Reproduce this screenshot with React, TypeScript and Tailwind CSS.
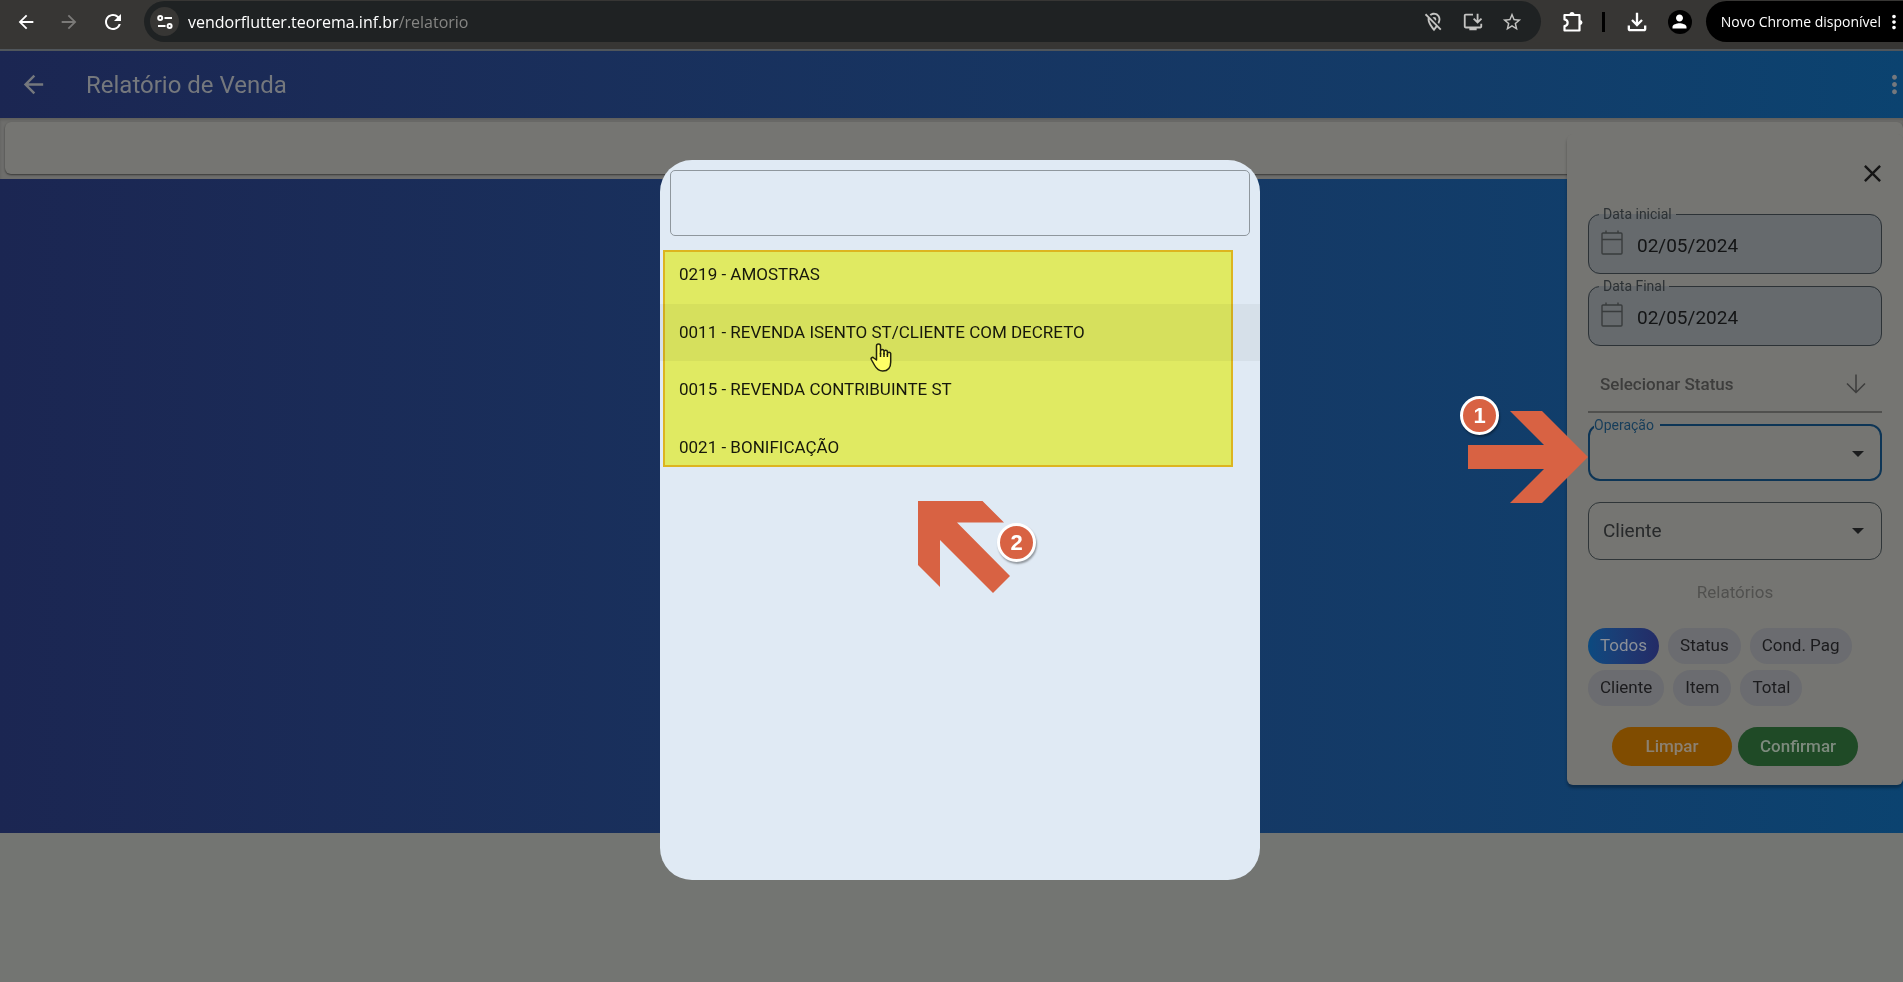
import type { ReactNode } from "react";
import {
  MdArrowBack,
  MdArrowForward,
  MdClose,
  MdMoreVert,
  MdOutlineFileDownload,
  MdOutlineInstallDesktop,
  MdOutlineLocationOff,
  MdPerson,
  MdRefresh,
  MdStarBorder,
} from "react-icons/md";

const operations = [
  "0219 - AMOSTRAS",
  "0011 - REVENDA ISENTO ST/CLIENTE COM DECRETO",
  "0015 - REVENDA CONTRIBUINTE ST",
  "0021 - BONIFICAÇÃO",
];

const reportRows = [
  ["Todos", "Status", "Cond. Pag"],
  ["Cliente", "Item", "Total"],
];

function TuneIcon() {
  return (
    <svg width="16" height="14" viewBox="0 0 16 14" fill="none" stroke="currentColor" strokeWidth="2">
      <circle cx="3.2" cy="3" r="2" />
      <path d="M7.5 3H15M1 11h7.5" />
      <circle cx="12.6" cy="11" r="2" />
    </svg>
  );
}

function PuzzleIcon() {
  return (
    <svg width="22" height="22" viewBox="0 0 22 22" fill="none" stroke="currentColor" strokeWidth="2.2" strokeLinejoin="round">
      <path d="M2.500 4H17.500V19.500H2.500V15.200c4.200-.6 4.200-6.200 0-6.800z" />
      <path d="M7.500 3.500a2.500 2.500 0 0 1 5 0zM18 9a2.500 2.500 0 0 1 0 5z" fill="currentColor" stroke="none" />
    </svg>
  );
}

function CalendarIcon() {
  return (
    <svg width="22" height="25" viewBox="0 0 22 25" fill="none" stroke="currentColor" strokeWidth="1.4" className="shrink-0">
      <rect x="1" y="3" width="20" height="21" rx="1" />
      <path d="M1 9.5h20M5 0.5V3M17 0.5V3" />
    </svg>
  );
}

function Caret() {
  return (
    <svg width="12" height="6" viewBox="0 0 12 6" fill="currentColor" className="pointer-events-none shrink-0 text-[#1b1c1d]">
      <path d="M0 0h12L6 6z" />
    </svg>
  );
}

function BrowserBar() {
  return (
    <header className="flex h-[51px] shrink-0 items-start overflow-hidden border-b-2 border-[#50565b] bg-[#373634] text-white">
      <div className="flex h-11 items-center gap-[21px] pl-[15px]">
        <button aria-label="Voltar"><MdArrowBack size={22} /></button>
        <button aria-label="Avançar" className="text-[#7b7a78]"><MdArrowForward size={22} /></button>
        <button aria-label="Recarregar"><MdRefresh size={24} /></button>
      </div>
      <div className="mt-px ml-[19px] flex h-[41px] min-w-0 flex-1 items-center rounded-full bg-[#1f2223] pr-[18px] pl-[6px]">
        <span className="flex size-[29px] shrink-0 items-center justify-center rounded-full bg-[#373634]">
          <TuneIcon />
        </span>
        <span className="ml-[9px] flex-1 font-['Open_Sans','Noto_Sans',sans-serif] text-base">
          vendorflutter.teorema.inf.br<span className="text-[#858583]">/relatorio</span>
        </span>
        <div className="flex items-center gap-[17px] text-[#c4c4c2]">
          <MdOutlineLocationOff size={22} />
          <MdOutlineInstallDesktop size={22} />
          <MdStarBorder size={22} />
        </div>
      </div>
      <div className="flex h-[43px] items-center">
        <button aria-label="Extensões" className="ml-[21px]"><PuzzleIcon /></button>
        <span className="ml-[18px] h-5 w-[3px] bg-black" />
        <button aria-label="Downloads" className="ml-[18px]"><MdOutlineFileDownload size={28} /></button>
        <span className="ml-[17px] flex size-6 items-center justify-center rounded-full bg-black">
          <MdPerson size={21} />
        </span>
      </div>
      <button className="mt-px -mr-[2px] ml-[14px] flex h-[41px] items-center rounded-l-full bg-black pl-[15px] font-['Open_Sans','Noto_Sans',sans-serif] text-sm">
        Novo Chrome disponível
        <MdMoreVert size={22} className="ml-[2px]" />
      </button>
    </header>
  );
}

function DateField({ id, label }: { id: string; label: string }) {
  return (
    <fieldset className="min-w-0 rounded-xl border border-[#2c3236] bg-[#666a6d] px-[10px]">
      <legend className="px-1 text-sm leading-[14px] text-[#2c3134]">
        <label htmlFor={id}>{label}</label>
      </legend>
      <div className="flex h-[52px] items-center gap-[14px] px-[2px] pb-[10px] text-[#393c3d]">
        <CalendarIcon />
        <input id={id} defaultValue="02/05/2024" className="mt-2 w-full min-w-0 bg-transparent text-[19px] text-[#131415] outline-none" />
      </div>
    </fieldset>
  );
}

function FilterPanel() {
  return (
    <aside className="absolute top-[134px] right-0 w-[336px] rounded-md bg-[#757572] px-[21px] pb-[19px] shadow-[0_3px_3px_rgba(0,0,0,0.3)]">
      <div className="flex h-[73px] items-start justify-end pt-[25px]">
        <button aria-label="Fechar" className="-mr-[5px] text-[#151515]"><MdClose size={29} /></button>
      </div>
      <div className="flex flex-col gap-[5px]">
        <DateField id="data-inicial" label="Data inicial" />
        <DateField id="data-final" label="Data Final" />
      </div>
      <div className="relative mt-[11px] border-b-2 border-[#50504e]">
        <select aria-label="Selecionar Status" className="block h-[54px] w-full appearance-none px-3 pt-[2px] text-[17px] font-medium text-[#3d3d3c] outline-none">
          <option>Selecionar Status</option>
        </select>
        <svg width="20" height="20" viewBox="0 0 20 20" fill="none" stroke="#3d3d3c" strokeWidth="1.5" className="pointer-events-none absolute top-[17px] right-4">
          <path d="M10 0.500V18.500M1 9.500l9 9 9-9" />
        </svg>
      </div>
      <fieldset className="relative mt-[5px] min-w-0 rounded-xl border-2 border-[#0d3556]">
        <legend className="ml-1 pr-[6px] text-sm leading-[14px] text-[#163d5a]">
          <label htmlFor="operacao">Operação</label>
        </legend>
        <select id="operacao" className="block h-[47px] w-full appearance-none outline-none">
          <option></option>
        </select>
        <span className="pointer-events-none absolute inset-x-0 top-0 flex h-11 items-center justify-end pr-4">
          <Caret />
        </span>
      </fieldset>
      <div className="relative mt-[21px] rounded-xl border border-[#2f3538]">
        <select aria-label="Cliente" className="block h-14 w-full appearance-none px-[14px] text-[19px] text-[#27292a] outline-none">
          <option>Cliente</option>
        </select>
        <span className="pointer-events-none absolute inset-x-0 top-0 flex h-14 items-center justify-end pr-[17px]">
          <Caret />
        </span>
      </div>
      <h2 className="mt-5 text-center text-[17px] leading-6 text-[#51514f]">Relatórios</h2>
      <div className="mt-6 flex flex-col gap-[6px]">
        {reportRows.map((row) => (
          <div key={row[0]} className="flex gap-[9px]">
            {row.map((name) =>
              name === "Todos" ? (
                <button key={name} className="h-9 rounded-full bg-linear-to-r from-[#0b4a80] to-[#232b66] px-3 text-[17px] text-[#8b9098]">{name}</button>
              ) : (
                <button key={name} className="h-9 rounded-full bg-[#6b6c70] px-3 text-[17px] text-[#1b1b1d]">{name}</button>
              ),
            )}
          </div>
        ))}
      </div>
      <div className="mt-[21px] flex justify-center gap-[6px] text-[17px] font-medium">
        <button className="h-[39px] w-[120px] rounded-full bg-[#804c00] text-[#8b8172]">Limpar</button>
        <button className="h-[39px] w-[120px] rounded-full bg-[#1f4a26] text-[#7d8a7d]">Confirmar</button>
      </div>
      <div className="absolute top-[262px] -left-[109px]">
        <svg width="130" height="110" viewBox="0 0 130 110">
          <path fill="#d86243" d="M52 15h32l46 46-46 46H52l34-34H10V49h76z" />
        </svg>
        <Step className="absolute top-0 left-[2px]">1</Step>
      </div>
    </aside>
  );
}

function Step({ children, className }: { children: ReactNode; className: string }) {
  return (
    <span className={`${className} flex size-[39px] items-center justify-center rounded-full border-[3px] border-white bg-[#d86243] font-['Liberation_Sans',sans-serif] text-[22px] font-bold text-white shadow-[1px_2px_2px_rgba(0,0,0,0.35)]`}>
      {children}
    </span>
  );
}

function HandCursor() {
  return (
    <svg width="22" height="29" viewBox="0 0 22 29" fill="#fff" stroke="#222" strokeWidth="1.5" strokeLinejoin="round" className="absolute top-[183px] left-[210px]">
      <path d="M6.500 17V3a2 2 0 0 1 4 0v8-3a1.800 1.800 0 0 1 3.500 0v3-2a1.700 1.700 0 0 1 3.400 0v2.500-1a1.700 1.700 0 0 1 3.300 0V19c0 6-3 9-8 9-4 0-6-2-8-5.500L1.300 16.500c-.8-1.800 1.200-2.800 2.500-1.500z" />
      <path d="M10.500 10v4M14 10v4M17.400 11v3" fill="none" />
    </svg>
  );
}

function OperationDialog() {
  return (
    <div role="dialog" aria-label="Operação" className="relative h-[720px] w-[600px] rounded-[32px] bg-[#e0eaf4] pt-[10px]">
      <input aria-label="Pesquisar operação" className="mx-[10px] block h-[66px] w-[580px] rounded-[5px] border border-[#8f979d] bg-transparent px-3 outline-none" />
      <ul className="mt-[10px] grid h-[230px] grid-rows-4">
        {operations.map((operation, index) => (
          <li key={operation} className={index === 1 ? "bg-[#d6e0e9]" : ""}>
            <button className="h-full w-full px-[19px] text-left text-[17px] text-[#17181a]">{operation}</button>
          </li>
        ))}
      </ul>
      <HandCursor />
      <div className="pointer-events-none absolute top-[90px] left-[3px] h-[217px] w-[570px] border-2 border-[#fcc520] bg-[#ffff66] mix-blend-multiply" />
      <svg width="94" height="94" viewBox="0 0 94 94" className="absolute top-[340px] left-[257px]">
        <path fill="#d86243" d="M1 1h64.500L87 22.500H40L93 76 76 93 23 40v47L1 65z" />
      </svg>
      <Step className="absolute top-[363px] left-[337px]">2</Step>
    </div>
  );
}

export default function App() {
  return (
    <div className="relative flex h-screen flex-col overflow-hidden bg-[#737572] font-[Roboto,sans-serif]">
      <BrowserBar />
      <div className="flex h-[67px] shrink-0 items-center bg-linear-to-r from-[#1b2652] to-[#0b4370] text-[#75787d]">
        <button aria-label="Voltar" className="ml-[19px]"><MdArrowBack size={29} /></button>
        <h1 className="ml-[38px] flex-1 text-2xl leading-8">Relatório de Venda</h1>
        <button aria-label="Mais opções" className="-mr-[6px]"><MdMoreVert size={29} /></button>
      </div>
      <div className="h-[61px] shrink-0 bg-[#6e6e6c] pt-1 pl-[5px] shadow-[inset_0_2px_3px_rgba(0,0,0,0.15)]">
        <div className="h-[52px] rounded-md bg-[#757572] shadow-[0_1px_2px_rgba(0,0,0,0.5)]" />
      </div>
      <main className="h-[654px] shrink-0 bg-linear-to-r from-[#1b2652] to-[#0b4370]" />
      <FilterPanel />
      <div className="pointer-events-none absolute inset-0 flex items-start justify-center pt-40 pl-[17px]">
        <OperationDialog />
      </div>
    </div>
  );
}
